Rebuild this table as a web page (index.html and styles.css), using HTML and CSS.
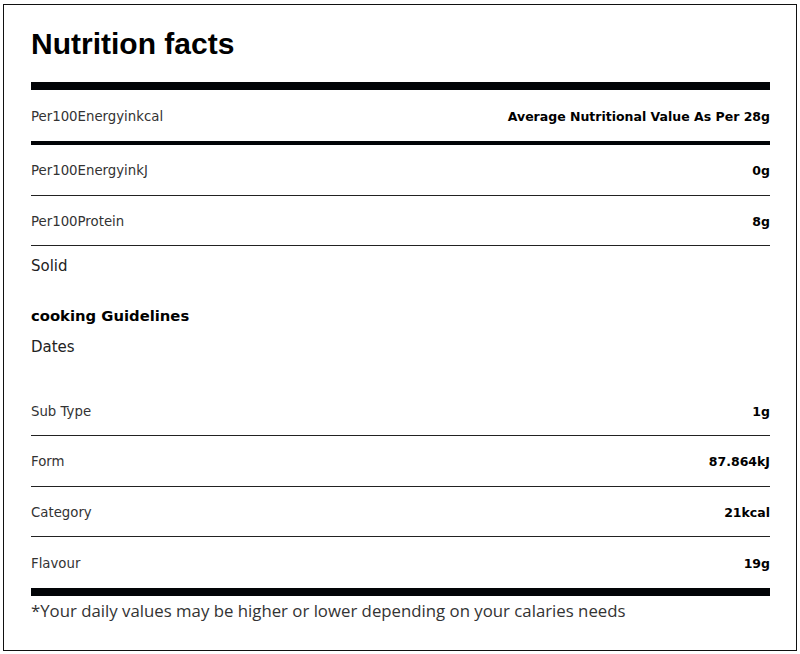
FILE: index.html
```html
<!DOCTYPE html>
<html lang="en">
<head>
<meta charset="utf-8">
<title>Nutrition facts</title>
<link rel="stylesheet" href="styles.css">
</head>
<body>
<section class="card">
  <h1 class="title">Nutrition facts</h1>
  <div class="bar bar-thick"></div>
  <div class="row row-head">
    <span class="label">Per100Energyinkcal</span>
    <span class="value">Average Nutritional Value As Per 28g</span>
  </div>
  <div class="bar bar-mid"></div>
  <div class="row">
    <span class="label">Per100EnergyinkJ</span>
    <span class="value">0g</span>
  </div>
  <div class="row">
    <span class="label">Per100Protein</span>
    <span class="value">8g</span>
  </div>
  <p class="plain solid">Solid</p>
  <h3 class="subhead">cooking Guidelines</h3>
  <p class="plain dates">Dates</p>
  <div class="row row-sub">
    <span class="label">Sub Type</span>
    <span class="value">1g</span>
  </div>
  <div class="row">
    <span class="label">Form</span>
    <span class="value">87.864kJ</span>
  </div>
  <div class="row">
    <span class="label">Category</span>
    <span class="value">21kcal</span>
  </div>
  <div class="row row-last">
    <span class="label">Flavour</span>
    <span class="value">19g</span>
  </div>
  <div class="bar bar-thick"></div>
  <p class="note">*Your daily values may be higher or lower depending on your calaries needs</p>
</section>
</body>
</html>
```
FILE: styles.css
```css
* { box-sizing: border-box; }
html, body { margin: 0; padding: 0; background: #fff; }
body { padding: 4px 3px 0 3px; font-family: "DejaVu Sans", sans-serif; color: #000; }
.card {
  width: 794px;
  height: 647px;
  border: 1px solid #111;
  padding: 21px 26px 0 27px;
  display: flex;
  flex-direction: column;
}
.title {
  margin: 0;
  font-family: "Liberation Sans", Arial, sans-serif;
  font-weight: 700;
  font-size: 30px;
  line-height: 36px;
  color: #000;
}
.bar { background: #020407; flex: none; }
.bar-thick { height: 8px; margin-top: 20px; }
.bar-mid { height: 4px; }
.row {
  display: flex;
  justify-content: space-between;
  align-items: center;
  height: 50.5px;
  padding-top: 2px;
  flex: none;
  border-bottom: 1px solid #222;
}
.row-head { border-bottom: none; height: 51px; }
.row-sub { margin-top: 28.5px; }
.row-last { border-bottom: none; }
.row-last + .bar-thick { margin-top: 0; }
.label { color: #333; font-size: 13.3px; }
.value { font-weight: 700; color: #000; font-size: 12.5px; }
.plain { margin: 0; font-size: 15px; line-height: 20px; color: #222; }
.solid { margin-top: 10px; }
.subhead { margin: 30px 0 0 0; font-size: 14.8px; line-height: 20px; font-weight: 700; color: #000; }
.dates { margin-top: 11px; }
.note {
  margin: 5px 0 0 0;
  font-family: "Open Sans", sans-serif;
  font-size: 16.8px;
  line-height: 20px;
  color: #333;
}
```
